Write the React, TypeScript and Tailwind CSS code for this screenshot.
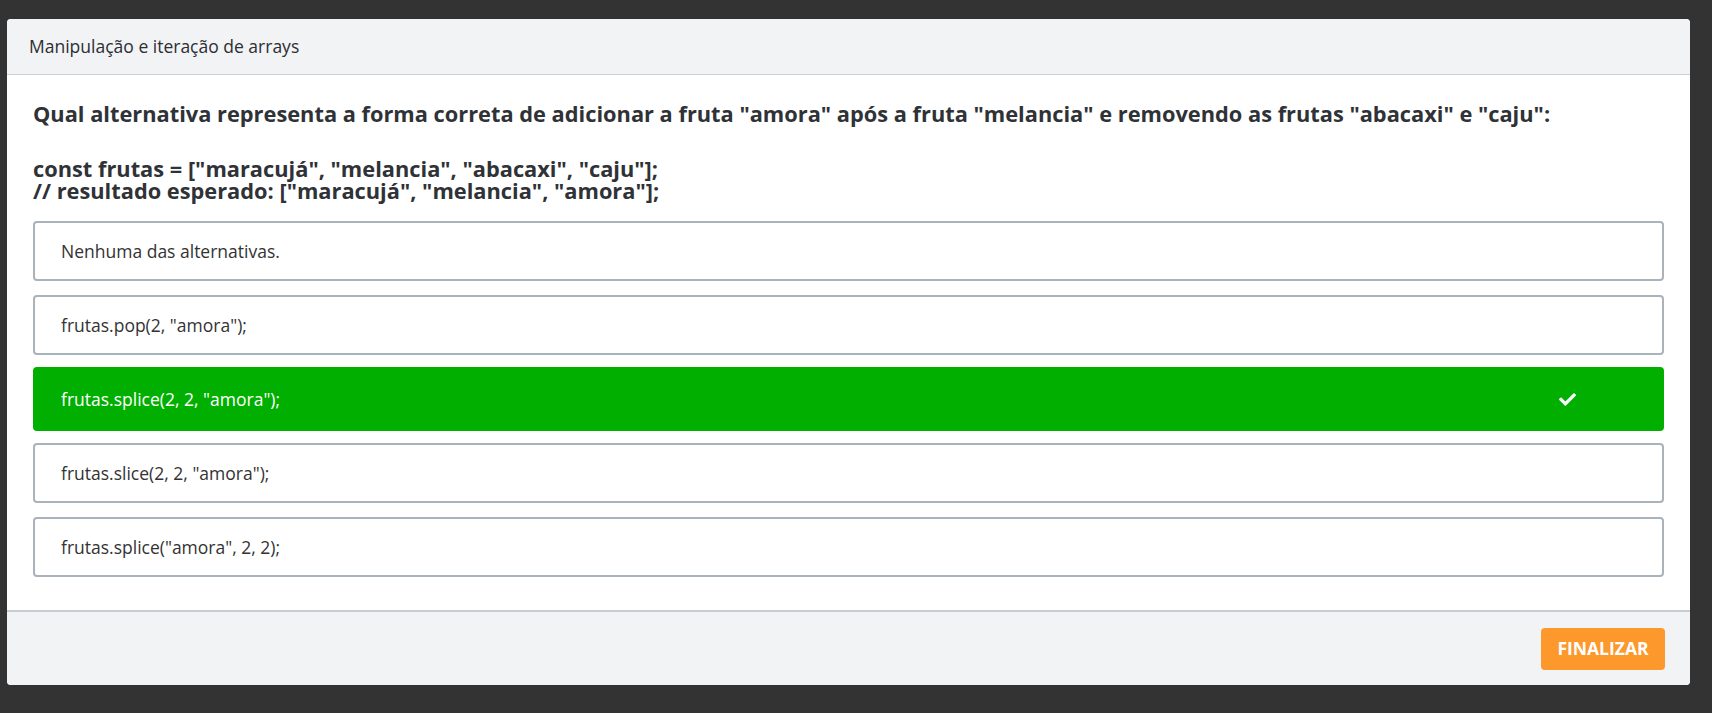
import { FaCheck } from 'react-icons/fa';

const alternativas = [
  { texto: 'Nenhuma das alternativas.', correta: false },
  { texto: 'frutas.pop(2, "amora");', correta: false },
  { texto: 'frutas.splice(2, 2, "amora");', correta: true },
  { texto: 'frutas.slice(2, 2, "amora");', correta: false },
  { texto: 'frutas.splice("amora", 2, 2);', correta: false },
];

export default function App() {
  return (
    <div className="min-h-screen bg-[#333333] pl-[7px] pr-[22px] pt-[19px] pb-[28px] font-['Open_Sans',_'Liberation_Sans',_sans-serif]">
      <div className="bg-white rounded-[4px] overflow-hidden flex flex-col">
        {/* cabeçalho */}
        <div className="h-[56px] flex items-center px-[22px] bg-[#f2f3f5] border-b border-[#cdd0d4]">
          <span className="text-[17.5px] text-[#2b2e33]">Manipulação e iteração de arrays</span>
        </div>

        {/* pergunta */}
        <div className="px-[26px] pt-[28px] pb-[33px]">
          <div className="text-[21.8px] font-bold leading-[22px] text-[#2f3236]">
            <p className="mb-[33px]">
              Qual alternativa representa a forma correta de adicionar a fruta "amora" após a fruta "melancia" e removendo as frutas "abacaxi" e "caju":
            </p>
            <p>const frutas = ["maracujá", "melancia", "abacaxi", "caju"];</p>
            <p>// resultado esperado: ["maracujá", "melancia", "amora"];</p>
          </div>

          <div className="mt-[19px] flex flex-col gap-[14px]">
            {alternativas.map((alt) =>
              alt.correta ? (
                <div
                  key={alt.texto}
                  className="-my-[2px] h-[64px] flex items-center justify-between pl-[28px] pr-[88px] rounded-[4px] bg-[#00af00] text-white text-[17.5px]"
                >
                  <span>{alt.texto}</span>
                  <FaCheck size={17} />
                </div>
              ) : (
                <div
                  key={alt.texto}
                  className="h-[60px] flex items-center pl-[26px] rounded-[4px] border-2 border-[#aab2bb] text-[17.5px] text-[#333]"
                >
                  {alt.texto}
                </div>
              )
            )}
          </div>
        </div>

        {/* rodapé */}
        <div className="h-[75px] flex items-center justify-end px-[25px] bg-[#f2f3f5] border-t-2 border-[#c9ccd0]">
          <button className="h-[42px] w-[124px] rounded-[4px] bg-[#fd982c] text-white text-[17.5px] font-bold uppercase">
            Finalizar
          </button>
        </div>
      </div>
    </div>
  );
}
